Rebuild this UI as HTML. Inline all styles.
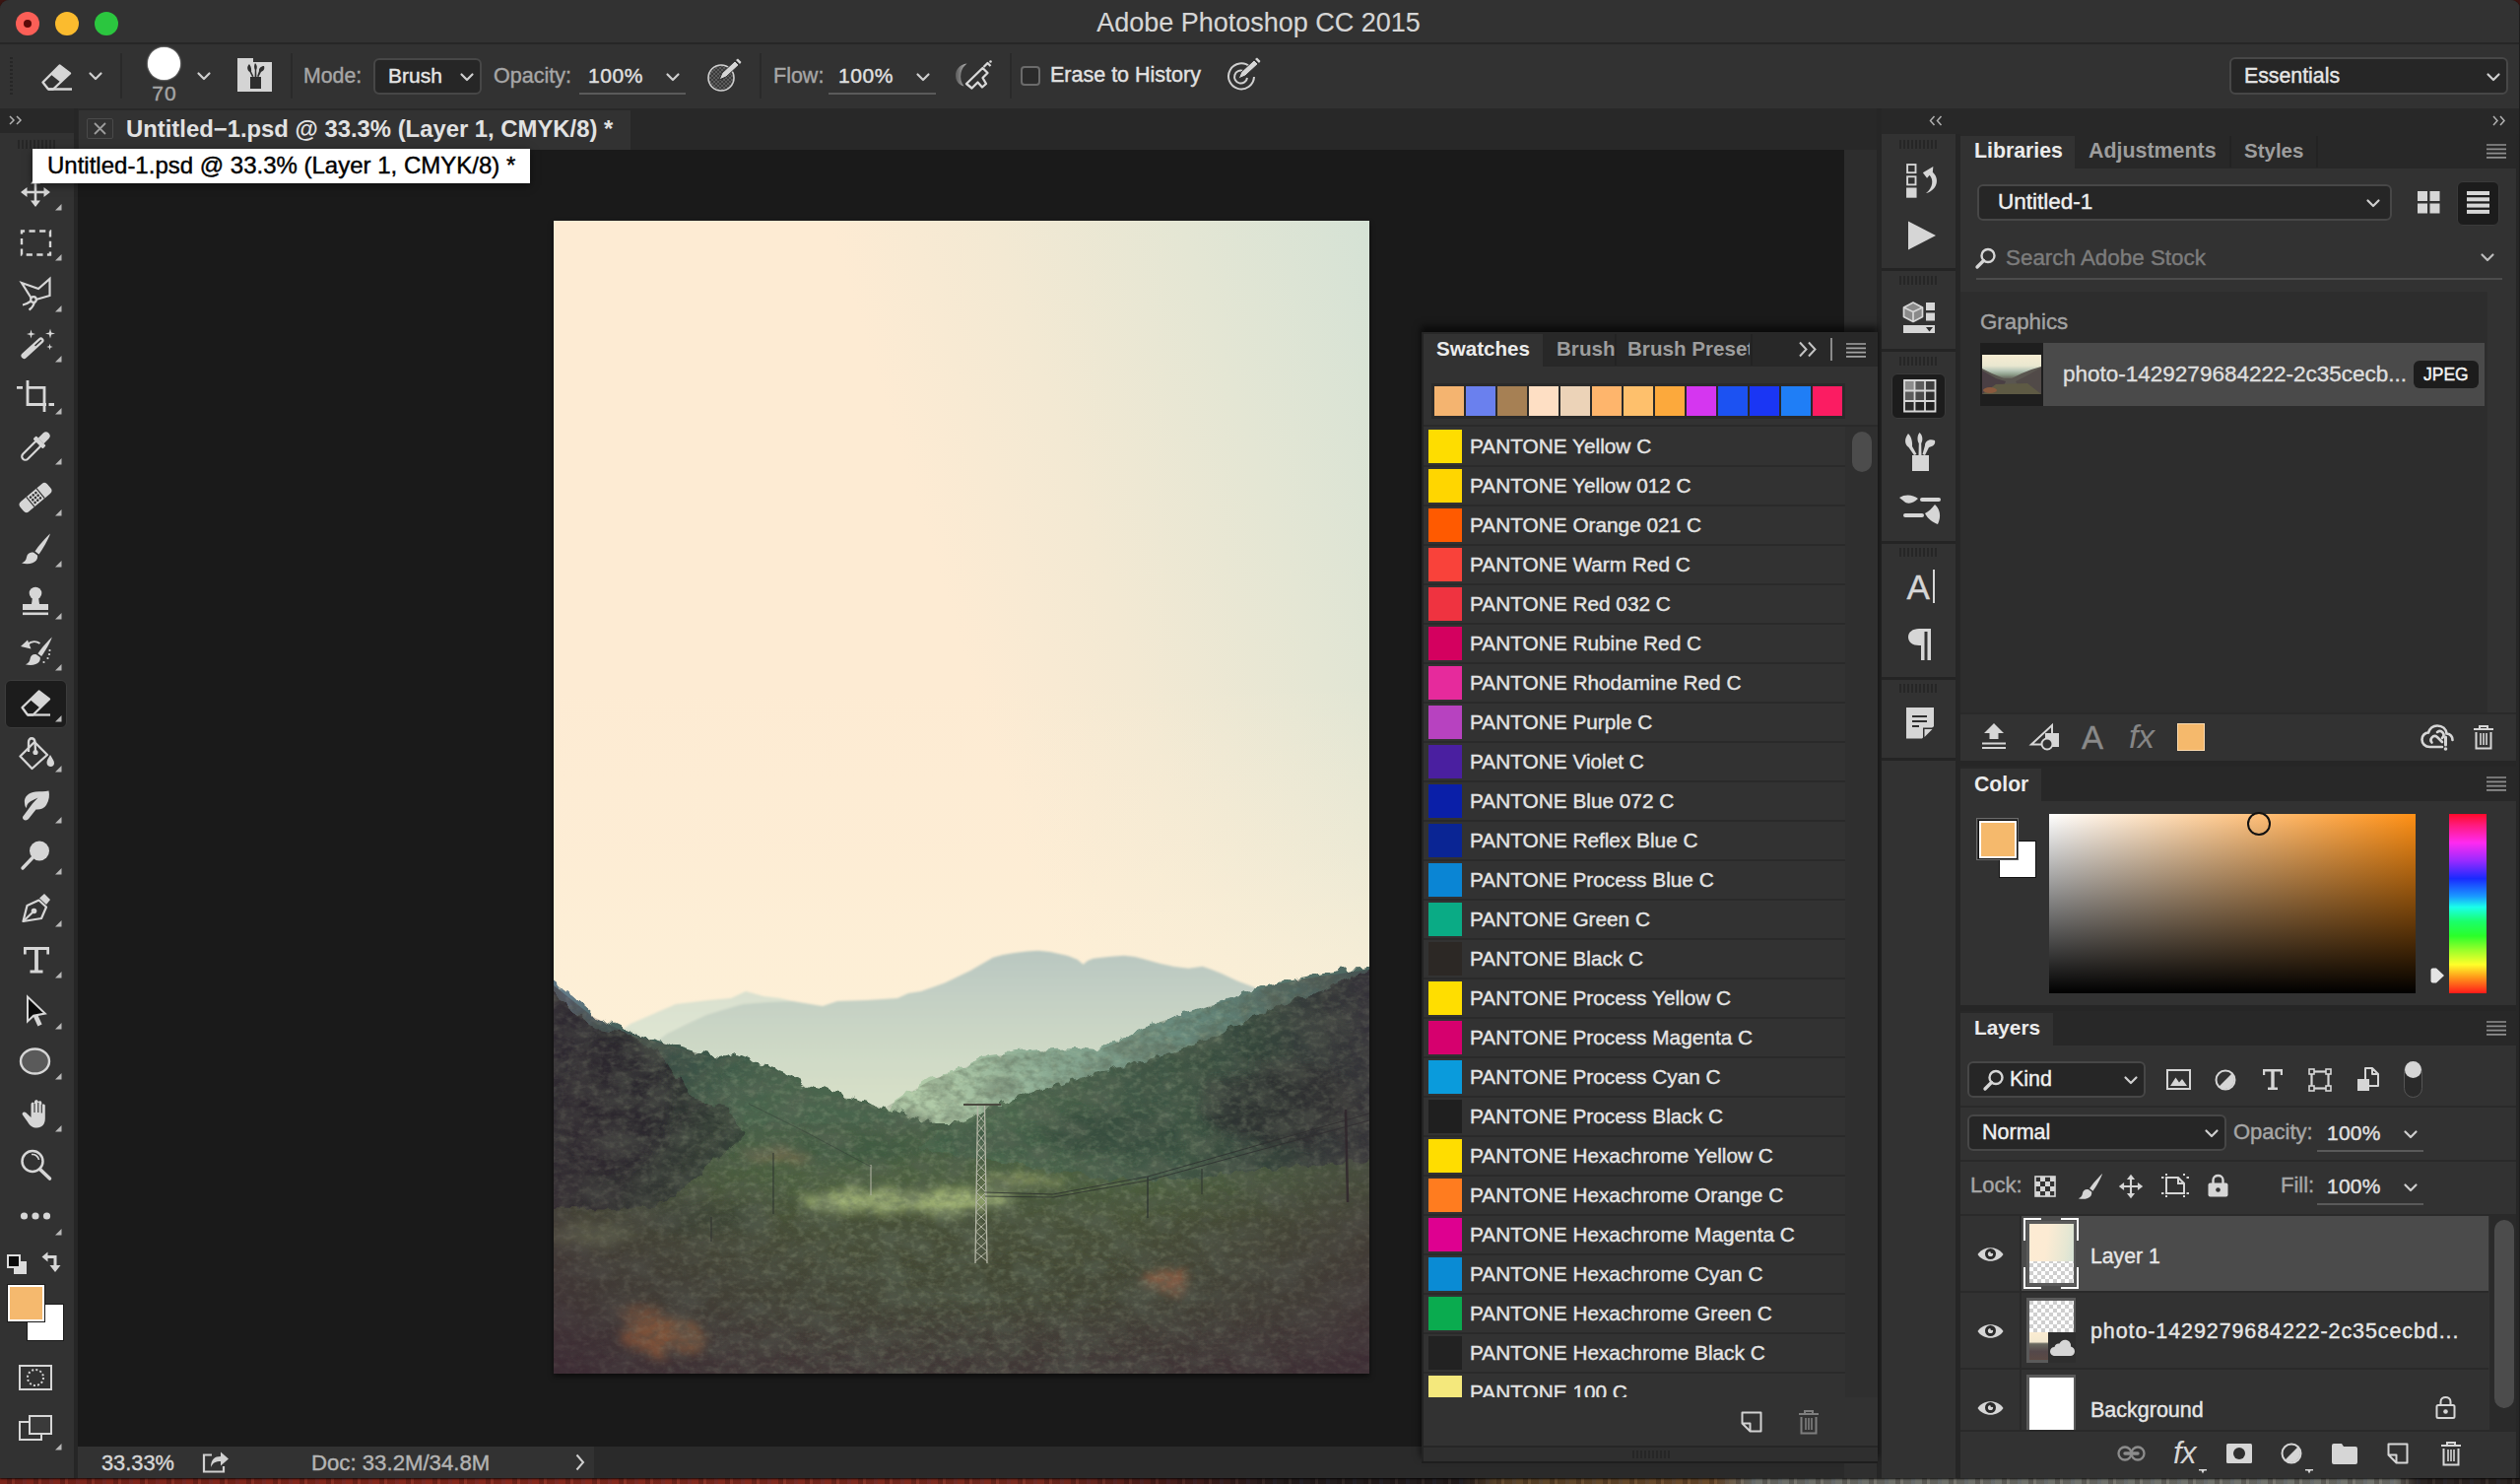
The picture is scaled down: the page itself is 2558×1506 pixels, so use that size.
<!DOCTYPE html>
<html lang="en">
<head>
<meta charset="utf-8">
<title>Adobe Photoshop CC 2015</title>
<style>
*{box-sizing:border-box;margin:0;padding:0}
html,body{width:2558px;height:1506px;overflow:hidden}
body{position:relative;background:#3a1512;font-family:"Liberation Sans",sans-serif;font-size:21px;color:#dcdcdc;-webkit-font-smoothing:antialiased}
.a{position:absolute}
.t{position:absolute;white-space:pre;line-height:1;-webkit-text-stroke:.4px currentColor}
.dim{color:#a6a6a6}
.b{font-weight:bold;-webkit-text-stroke:0}
svg{position:absolute;overflow:visible}
#win{position:absolute;left:0;top:0;width:2558px;height:1500px;background:#282828;border-radius:9px 9px 0 0;overflow:hidden;box-shadow:0 1px 2px rgba(0,0,0,.8)}
#desk{position:absolute;left:0;top:1498px;width:2558px;height:8px;background:repeating-linear-gradient(90deg,rgba(20,10,10,.0) 0 7px,rgba(20,10,10,.25) 7px 12px,rgba(200,160,140,.08) 12px 15px,rgba(20,10,10,.15) 15px 23px,rgba(40,60,110,.12) 23px 27px),linear-gradient(90deg,#7c241a 0,#86281c 20%,#7a2a1e 41%,#4a1c18 46%,#221c1c 51%,#221c1c 58%,#5a4428 59.500%,#6a4a2a 68%,#6c6e68 69.500%,#70726c 95%,#2a2422 96%)}
.dd{position:absolute;background:#262626;border:2px solid #474747;border-radius:6px}
.ul{position:absolute;height:1.5px;background:#5a5a5a}
.sep{position:absolute;width:2px;background:#2a2a2a}
.tabbar{position:absolute;background:#282828}
.tab{position:absolute;background:#323232}
.grip{position:absolute;height:9px;background:repeating-linear-gradient(90deg,#262626 0 2px,transparent 2px 4px)}
</style>
</head>
<body>
<div id="desk"></div>
<div id="win">

<!-- TITLEBAR -->
<div class="a" id="titlebar" style="left:0;top:0;width:2558px;height:43px;background:#323232"></div>
<div class="a" style="left:0;top:43px;width:2558px;height:2px;background:#262626"></div>
<div class="a" style="left:16px;top:12px;width:24px;height:24px;border-radius:50%;background:#fc5f57"></div>
<div class="a" style="left:24px;top:20px;width:8px;height:8px;border-radius:50%;background:#5c0a08"></div>
<div class="a" style="left:56px;top:12px;width:24px;height:24px;border-radius:50%;background:#fbbb2e"></div>
<div class="a" style="left:96px;top:12px;width:24px;height:24px;border-radius:50%;background:#2bc63f"></div>
<div class="t" style="left:0;width:2558px;text-align:center;top:10px;font-size:27px;color:#d6d6d6;padding-right:3px;-webkit-text-stroke:.15px currentColor">Adobe Photoshop CC 2015</div>

<!-- OPTIONSBAR -->
<div class="a" id="optbar" style="left:0;top:45px;width:2558px;height:65px;background:#323232"></div>
<!-- grip -->
<div class="a" style="left:10px;top:58px;width:3px;height:38px;background:repeating-linear-gradient(180deg,#262626 0 2px,transparent 2px 4px)"></div>
<!-- eraser icon -->
<svg style="left:40px;top:62px" width="36" height="32" viewBox="0 0 36 32"><g fill="none" stroke="#d6d6d6" stroke-width="2.4" stroke-linejoin="round"><path d="M3.5 21.5 L20.5 4.5 L31 12.5 L14 28.5 L9 28.5 Z"/><path d="M9 28.5 H33"/></g><path d="M11.5 13.5 L20.5 4.5 L31 12.5 L21.5 21.5 Z" fill="#d6d6d6"/></svg>
<svg style="left:90px;top:73px" width="14" height="9" viewBox="0 0 14 9"><path d="M1.5 1.5 L7 7 L12.5 1.5" fill="none" stroke="#cfcfcf" stroke-width="2.2" stroke-linecap="round" stroke-linejoin="round"/></svg>
<div class="sep" style="left:122px;top:54px;height:46px"></div>
<!-- brush preview -->
<div class="a" style="left:150px;top:48px;width:33px;height:33px;border-radius:50%;background:#fff;box-shadow:0 0 2px #fff"></div>
<div class="t dim" style="left:138px;width:58px;text-align:center;top:84px;font-size:21px;letter-spacing:1px">70</div>
<svg style="left:200px;top:73px" width="14" height="9" viewBox="0 0 14 9"><path d="M1.5 1.5 L7 7 L12.5 1.5" fill="none" stroke="#cfcfcf" stroke-width="2.2" stroke-linecap="round" stroke-linejoin="round"/></svg>
<!-- brush panel icon -->
<svg style="left:241px;top:59px" width="35" height="34" viewBox="0 0 35 34"><path d="M0 0 H16 V4 H35 V34 H0 Z" fill="#d4d4d4"/><g fill="#2e2e2e"><rect x="13" y="19" width="11" height="12"/><path d="M12 6 C9.5 8.5 9.5 12 12.5 14 L15 19 L16.5 18.5 L14 13.5 C14.5 11 13.5 8 12 6Z"/><path d="M18 5 C16.8 7 16.8 10 17.8 12 L17.6 19 H19.4 L19.2 12 C20.2 10 20.2 7 18 5Z"/><path d="M27 8 C24 8 21.5 10.5 22 13 L20 18.5 L21.5 19 L24 14 C26.5 13 28 11 27 8Z"/></g></svg>
<div class="sep" style="left:295px;top:54px;height:46px"></div>
<div class="t dim" style="left:308px;top:67px;font-size:21.3px">Mode:</div>
<div class="dd" style="left:379px;top:58.5px;width:110px;height:37px"></div>
<div class="t" style="left:394px;top:66px;font-size:21px;color:#e6e6e6">Brush</div>
<svg style="left:467px;top:74px" width="14" height="9" viewBox="0 0 14 9"><path d="M1.5 1.5 L7 7 L12.5 1.5" fill="none" stroke="#cfcfcf" stroke-width="2.2" stroke-linecap="round" stroke-linejoin="round"/></svg>
<div class="t dim" style="left:501px;top:67px;font-size:21.5px">Opacity:</div>
<div class="t" style="left:597px;top:66px;font-size:21px;color:#e0e0e0;letter-spacing:.6px">100%</div>
<div class="ul" style="left:588px;top:94px;width:108px"></div>
<svg style="left:676px;top:74px" width="14" height="9" viewBox="0 0 14 9"><path d="M1.5 1.5 L7 7 L12.5 1.5" fill="none" stroke="#cfcfcf" stroke-width="2.2" stroke-linecap="round" stroke-linejoin="round"/></svg>
<!-- pressure opacity icon -->
<svg style="left:716px;top:58px" width="38" height="38" viewBox="0 0 38 38"><defs><pattern id="ck" width="4" height="4" patternUnits="userSpaceOnUse"><rect width="4" height="4" fill="#3a3a3a"/><rect width="2" height="2" fill="#5c5c5c"/><rect x="2" y="2" width="2" height="2" fill="#5c5c5c"/></pattern></defs><circle cx="16" cy="21" r="13" fill="url(#ck)" stroke="#cfcfcf" stroke-width="1.6"/><path d="M14 23 L17 16 L30 4 L34 8 L21 20 Z" fill="#d6d6d6" stroke="#323232" stroke-width="1"/><path d="M31 3 L33 1.5 L36.5 5 L35 7Z" fill="#d6d6d6"/></svg>
<div class="sep" style="left:771px;top:54px;height:46px"></div>
<div class="t dim" style="left:785px;top:67px;font-size:21.5px">Flow:</div>
<div class="t" style="left:851px;top:66px;font-size:21px;color:#e0e0e0;letter-spacing:.6px">100%</div>
<div class="ul" style="left:841px;top:94px;width:109px"></div>
<svg style="left:930px;top:74px" width="14" height="9" viewBox="0 0 14 9"><path d="M1.5 1.5 L7 7 L12.5 1.5" fill="none" stroke="#cfcfcf" stroke-width="2.2" stroke-linecap="round" stroke-linejoin="round"/></svg>
<!-- airbrush icon -->
<svg style="left:968px;top:60px" width="42" height="34" viewBox="0 0 42 34"><defs><linearGradient id="abg" x1="0" y1="0" x2="1" y2="0"><stop offset="0" stop-color="#5a5a5a"/><stop offset="1" stop-color="#b4b4b4"/></linearGradient></defs><path d="M13.500 4.500 C6 5.500 1.500 11 2 17.500 C2.500 23 6 26.500 10.500 27.500 C7.500 23.500 6.500 19 7.500 14 C8.300 10 10.500 6.800 13.500 4.500Z" fill="url(#abg)"/><g fill="none" stroke="#d9d9d9" stroke-width="2.300" stroke-linejoin="round"><path d="M13 25 L29.500 9 L34.500 14 L29.500 19 L33 25 L29 28.500 L24.500 23.500 L18.500 29.500 Z"/><path d="M30.500 8 L34.500 4 L37.500 7"/></g><circle cx="37.500" cy="2.500" r="1.300" fill="#d9d9d9"/></svg>
<div class="sep" style="left:1025px;top:54px;height:46px"></div>
<div class="a" style="left:1036px;top:67px;width:20px;height:20px;border:2px solid #6b6b6b;border-radius:4px;background:#2b2b2b"></div>
<div class="t" style="left:1066px;top:66px;font-size:21.5px;color:#e2e2e2">Erase to History</div>
<!-- pressure size icon -->
<svg style="left:1243px;top:56px" width="38" height="40" viewBox="0 0 38 40"><g fill="none" stroke="#cfcfcf" stroke-width="2"><path d="M26 12 A13 13 0 1 0 30 22"/><path d="M19 16 A6.5 6.5 0 1 0 23 23"/></g><path d="M14 24 L17 17 L30 5 L34 9 L21 21 Z" fill="#d6d6d6" stroke="#323232" stroke-width="1"/><path d="M31 4 L33 2.5 L36.5 6 L35 8Z" fill="#d6d6d6"/></svg>
<!-- essentials -->
<div class="dd" style="left:2263px;top:58px;width:283px;height:38px"></div>
<div class="t" style="left:2278px;top:67px;font-size:21.3px;color:#e6e6e6">Essentials</div>
<svg style="left:2524px;top:74px" width="14" height="9" viewBox="0 0 14 9"><path d="M1.5 1.5 L7 7 L12.5 1.5" fill="none" stroke="#cfcfcf" stroke-width="2.2" stroke-linecap="round" stroke-linejoin="round"/></svg>


<!-- TOOLBAR -->
<div class="a" style="left:0;top:110px;width:74.5px;height:25px;background:#282828"></div>
<div class="a" style="left:0;top:135px;width:74.5px;height:1365px;background:#323232"></div>
<div class="a" style="left:74.5px;top:110px;width:5px;height:1390px;background:#262626"></div>
<svg style="left:9px;top:117px" width="14" height="10" viewBox="0 0 14 10"><path d="M1 1 L5 5 L1 9 M8 1 L12 5 L8 9" fill="none" stroke="#b0b0b0" stroke-width="1.5"/></svg>
<div class="grip" style="left:18px;top:142px;width:39px"></div>
<svg style="left:20px;top:179px" width="32" height="32" viewBox="0 0 32 32"><path fill="#d6d6d6" d="M16 1 L21 7.5 H17.3 V14.7 H24.5 V11 L31 16 L24.5 21 V17.3 H17.3 V24.5 H21 L16 31 L11 24.5 H14.7 V17.3 H7.5 V21 L1 16 L7.5 11 V14.7 H14.7 V7.5 H11 Z"/></svg>
<svg style="left:56px;top:207px" width="7" height="7" viewBox="0 0 7 7"><path d="M6.5 0 V6.5 H0 Z" fill="#b8b8b8"/></svg>
<svg style="left:20px;top:230px" width="32" height="32" viewBox="0 0 32 32"><rect x="2" y="4.5" width="29" height="24" fill="none" stroke="#d6d6d6" stroke-width="2.4" stroke-dasharray="6.2 4.4" stroke-dashoffset="3.1"/></svg>
<svg style="left:56px;top:258px" width="7" height="7" viewBox="0 0 7 7"><path d="M6.5 0 V6.5 H0 Z" fill="#b8b8b8"/></svg>
<svg style="left:20px;top:282px" width="32" height="32" viewBox="0 0 32 32"><g fill="none" stroke="#d6d6d6" stroke-width="2.2" stroke-linejoin="miter"><path d="M12 21 L2 5 L19 11 L30.5 1 V18 L16.5 22"/><circle cx="14" cy="22" r="2.8"/><path d="M11.5 23.5 C8 26 6 27 3 27.5 M15 25 C14 28 12 31 9.5 32.5"/></g></svg>
<svg style="left:56px;top:310px" width="7" height="7" viewBox="0 0 7 7"><path d="M6.5 0 V6.5 H0 Z" fill="#b8b8b8"/></svg>
<svg style="left:20px;top:333px" width="32" height="32" viewBox="0 0 32 32"><path d="M4.5 28 L21.5 12.5" stroke="#d6d6d6" stroke-width="6" stroke-linecap="round" fill="none"/><path d="M16 17.5 L21.5 12.5" stroke="#323232" stroke-width="1.6" stroke-linecap="round"/><path fill="#d6d6d6" d="M11.5 1.5 L12.49 5.01 L16.0 6 L12.49 6.99 L11.5 10.5 L10.51 6.99 L7.0 6 L10.51 5.01Z M31 0.5 L32.1 4.4 L36 5.5 L32.1 6.6 L31 10.5 L29.9 6.6 L26 5.5 L29.9 4.4Z M30.5 15.8 L31.204 18.296 L33.7 19 L31.204 19.704 L30.5 22.2 L29.796 19.704 L27.3 19 L29.796 18.296Z"/></svg>
<svg style="left:56px;top:361px" width="7" height="7" viewBox="0 0 7 7"><path d="M6.5 0 V6.5 H0 Z" fill="#b8b8b8"/></svg>
<svg style="left:20px;top:386px" width="32" height="32" viewBox="0 0 32 32"><g fill="none" stroke="#d6d6d6" stroke-width="2.8"><path d="M8 0 V24.5 H27"/><path d="M8 7.3 H25 V32"/><path d="M-3 7.3 H3 M29.5 24.5 H35"/></g></svg>
<svg style="left:56px;top:414px" width="7" height="7" viewBox="0 0 7 7"><path d="M6.5 0 V6.5 H0 Z" fill="#b8b8b8"/></svg>
<svg style="left:20px;top:437px" width="32" height="32" viewBox="0 0 32 32"><g transform="rotate(45 16 16)"><rect x="12.5" y="10" width="7" height="24" rx="3.5" fill="none" stroke="#d6d6d6" stroke-width="2.2"/><rect x="9" y="8" width="14" height="4.5" rx="1" fill="#d6d6d6"/><path d="M12 8 V1 Q12 -3 16 -3 Q20 -3 20 1 V8Z" fill="#d6d6d6"/></g></svg>
<svg style="left:56px;top:465px" width="7" height="7" viewBox="0 0 7 7"><path d="M6.5 0 V6.5 H0 Z" fill="#b8b8b8"/></svg>
<svg style="left:20px;top:489px" width="32" height="32" viewBox="0 0 32 32"><g transform="rotate(-40 16 16)"><rect x="-2" y="9.5" width="36" height="13" rx="4" fill="#d6d6d6"/><g fill="#323232"><circle cx="12.5" cy="12.5" r="1.3"/><circle cx="16" cy="12.5" r="1.3"/><circle cx="19.5" cy="12.5" r="1.3"/><circle cx="12.5" cy="16" r="1.3"/><circle cx="16" cy="16" r="1.3"/><circle cx="19.5" cy="16" r="1.3"/><circle cx="12.5" cy="19.5" r="1.3"/><circle cx="16" cy="19.5" r="1.3"/><circle cx="19.5" cy="19.5" r="1.3"/><rect x="8.7" y="9.5" width="1.2" height="13"/><rect x="22.1" y="9.5" width="1.2" height="13"/></g></g></svg>
<svg style="left:56px;top:517px" width="7" height="7" viewBox="0 0 7 7"><path d="M6.5 0 V6.5 H0 Z" fill="#b8b8b8"/></svg>
<svg style="left:20px;top:541px" width="32" height="32" viewBox="0 0 32 32"><path fill="#d6d6d6" d="M31 0.5 C27 4 19 13 15.5 18.5 L19.5 21.5 C23.5 16 29 6.5 31 0.5Z"/><path fill="#d6d6d6" d="M14.3 19.8 C10.5 18.5 7.5 21 7 24.5 C6.7 27.5 4.5 29.5 2 30.5 C8 32 14.5 31 17 27.5 C18.5 25.3 18.3 22.5 17.6 22.3Z"/></svg>
<svg style="left:56px;top:569px" width="7" height="7" viewBox="0 0 7 7"><path d="M6.5 0 V6.5 H0 Z" fill="#b8b8b8"/></svg>
<svg style="left:20px;top:594px" width="32" height="32" viewBox="0 0 32 32"><g fill="#d6d6d6"><circle cx="16" cy="8" r="6.3"/><path d="M13 12 H19 L20 19 H12Z"/><path d="M3 19 H29 V25 H3Z" /><rect x="3" y="27.5" width="26" height="2.6"/></g></svg>
<svg style="left:56px;top:622px" width="7" height="7" viewBox="0 0 7 7"><path d="M6.5 0 V6.5 H0 Z" fill="#b8b8b8"/></svg>
<svg style="left:20px;top:646px" width="32" height="32" viewBox="0 0 32 32"><g transform="translate(4 0) scale(0.93)"><path fill="#d6d6d6" d="M31 0.5 C27 4 19 13 15.5 18.5 L19.5 21.5 C23.5 16 29 6.5 31 0.5Z"/><path fill="#d6d6d6" d="M14.3 19.8 C10.5 18.5 7.5 21 7 24.5 C6.7 27.5 4.5 29.5 2 30.5 C8 32 14.5 31 17 27.5 C18.5 25.3 18.3 22.5 17.6 22.3Z"/></g><path d="M1 10 L11.5 12.5 L8 3.5Z" fill="#d6d6d6"/><path d="M8 8 C12 4.5 17 4.5 20.5 7" fill="none" stroke="#d6d6d6" stroke-width="2"/><g fill="#d6d6d6"><circle cx="30.5" cy="14" r="1.1"/><circle cx="30" cy="18" r="1.1"/><circle cx="28.5" cy="22" r="1.1"/><circle cx="24.5" cy="26" r="1.1"/></g></svg>
<svg style="left:56px;top:674px" width="7" height="7" viewBox="0 0 7 7"><path d="M6.5 0 V6.5 H0 Z" fill="#b8b8b8"/></svg>
<div class="a" style="left:5px;top:690px;width:63px;height:49px;background:#1c1c1c;border:1.5px solid #3c3c3c;border-radius:6px"></div>
<svg style="left:20px;top:698px" width="32" height="32" viewBox="0 0 32 32"><g fill="none" stroke="#d6d6d6" stroke-width="2.3" stroke-linejoin="round"><path d="M2.5 20 L19.5 3.5 L30 11.5 L13.5 27.5 L8 27.5 Z"/><path d="M8 27.5 H31"/></g><path d="M10.5 12 L19.5 3.5 L30 11.5 L20.5 20.5 Z" fill="#d6d6d6"/></svg>
<svg style="left:56px;top:726px" width="7" height="7" viewBox="0 0 7 7"><path d="M6.5 0 V6.5 H0 Z" fill="#b8b8b8"/></svg>
<svg style="left:20px;top:749px" width="32" height="32" viewBox="0 0 32 32"><g fill="none" stroke="#d6d6d6" stroke-width="2.3" stroke-linejoin="round"><path d="M15 4 L28 17 L12.5 31 L0.5 18.5 Z"/><path d="M9 14 V4 C9 -1 15 -1 15.5 4 L16 13"/></g><circle cx="16" cy="14.5" r="2.6" fill="#d6d6d6"/><path d="M31 17 C28.5 21 27.5 23 27.5 25 C27.5 27.5 29.5 29 31.5 29 C33.5 29 35 27.5 35 25.5 C35 23 33 20.5 31 17Z" fill="#d6d6d6"/></svg>
<svg style="left:56px;top:777px" width="7" height="7" viewBox="0 0 7 7"><path d="M6.5 0 V6.5 H0 Z" fill="#b8b8b8"/></svg>
<svg style="left:20px;top:801px" width="32" height="32" viewBox="0 0 32 32"><path fill="#d6d6d6" d="M5 14 C4 8 9 3 16 2.5 C21 2 25.5 2.5 29.5 1.5 C30.5 6 30 11 27 16 C25 19.5 20 21 16.5 20.5 L9 30 C7 32.5 2.5 31.5 3 28 L13 14.5 L18.5 8.5 L12.5 11.5 C9.5 13 7 15 7 19 C5.5 18 5.2 16 5 14Z"/></svg>
<svg style="left:56px;top:829px" width="7" height="7" viewBox="0 0 7 7"><path d="M6.5 0 V6.5 H0 Z" fill="#b8b8b8"/></svg>
<svg style="left:20px;top:853px" width="32" height="32" viewBox="0 0 32 32"><circle cx="20" cy="10.5" r="10" fill="#d6d6d6"/><path d="M13 17.5 L3 28" stroke="#d6d6d6" stroke-width="3.4" stroke-linecap="round"/></svg>
<svg style="left:56px;top:881px" width="7" height="7" viewBox="0 0 7 7"><path d="M6.5 0 V6.5 H0 Z" fill="#b8b8b8"/></svg>
<svg style="left:20px;top:906px" width="32" height="32" viewBox="0 0 32 32"><g fill="none" stroke="#d6d6d6" stroke-width="2.2" stroke-linejoin="round"><path d="M3.5 29 L7.5 13 L19.5 7.5 L27 14.5 L22 26 Z"/><path d="M3.5 29 L13.5 19.5"/></g><circle cx="14.5" cy="18.5" r="2.8" fill="#d6d6d6"/><path d="M20 5.5 L25 1 L31 7 L27 12Z" fill="#d6d6d6"/></svg>
<svg style="left:56px;top:934px" width="7" height="7" viewBox="0 0 7 7"><path d="M6.5 0 V6.5 H0 Z" fill="#b8b8b8"/></svg>
<svg style="left:20px;top:958px" width="32" height="32" viewBox="0 0 32 32"><path fill="#d6d6d6" d="M4 3 H30 V10.5 H27.300 V6 H18.900 V26.500 H23.500 V29.500 H10.500 V26.500 H15.100 V6 H6.700 V10.500 H4Z"/></svg>
<svg style="left:56px;top:986px" width="7" height="7" viewBox="0 0 7 7"><path d="M6.5 0 V6.5 H0 Z" fill="#b8b8b8"/></svg>
<svg style="left:20px;top:1010px" width="32" height="32" viewBox="0 0 32 32"><path d="M15.5 19.5 L20.5 30.5" stroke="#d6d6d6" stroke-width="4.6" fill="none"/><path d="M8 1.5 V26.5 L14 20.8 L25.8 18.6 Z" fill="#0a0a0a" stroke="#d6d6d6" stroke-width="2" stroke-linejoin="miter"/></svg>
<svg style="left:56px;top:1038px" width="7" height="7" viewBox="0 0 7 7"><path d="M6.5 0 V6.5 H0 Z" fill="#b8b8b8"/></svg>
<svg style="left:20px;top:1061px" width="32" height="32" viewBox="0 0 32 32"><ellipse cx="15.5" cy="16" rx="14.5" ry="12.5" fill="#5a5a5a" stroke="#d6d6d6" stroke-width="2.4"/></svg>
<svg style="left:56px;top:1089px" width="7" height="7" viewBox="0 0 7 7"><path d="M6.5 0 V6.5 H0 Z" fill="#b8b8b8"/></svg>
<svg style="left:20px;top:1114px" width="32" height="32" viewBox="0 0 32 32"><path fill="#d6d6d6" d="M11.5 17 V6.5 C11.5 4 15 4 15 6.5 V4 C15 1.5 18.8 1.5 18.8 4 V5 C18.8 2.8 22.3 2.8 22.3 5 V8 C22.3 6 25.8 6 25.8 8 V21 C25.8 27 22.5 30.5 17.5 30.5 C13 30.5 10.5 28.5 8 24.5 L3 17.5 C1.5 15.3 4.5 13.2 6.5 15.2 L11.5 20Z"/><g stroke="#323232" stroke-width="1.1"><path d="M15 6 V15 M18.8 5 V15 M22.3 7 V15.5"/></g></svg>
<svg style="left:56px;top:1142px" width="7" height="7" viewBox="0 0 7 7"><path d="M6.5 0 V6.5 H0 Z" fill="#b8b8b8"/></svg>
<svg style="left:20px;top:1166px" width="32" height="32" viewBox="0 0 32 32"><g fill="none" stroke="#d6d6d6"><circle cx="13" cy="12.5" r="10.5" stroke-width="2.5"/><path d="M20.5 20.5 L30.5 30" stroke-width="3.6" stroke-linecap="round"/><path d="M12 5.5 C15.5 5 19 7.5 19.5 11" stroke-width="1.6"/></g></svg>
<svg style="left:20px;top:1218px" width="32" height="32" viewBox="0 0 32 32"><g fill="#d6d6d6"><circle cx="4.5" cy="16" r="3.6"/><circle cx="16" cy="16" r="3.6"/><circle cx="27.5" cy="16" r="3.6"/></g></svg>
<svg style="left:56px;top:1247px" width="7" height="7" viewBox="0 0 7 7"><path d="M6.5 0 V6.5 H0 Z" fill="#b8b8b8"/></svg>
<div class="a" style="left:14px;top:1280px;width:13px;height:13px;background:#dcdcdc"></div>
<div class="a" style="left:7px;top:1273px;width:14px;height:14px;background:#0a0a0a;border:2px solid #dcdcdc"></div>
<svg style="left:42px;top:1270px" width="21" height="22" viewBox="0 0 21 22"><path d="M0.5 5.5 L6.5 0.5 V4 H15.5 V14 H19.5 L14 21 L8.5 14 H12.5 V7 H6.5 V10.5Z" fill="#d6d6d6"/></svg>
<div class="a" style="left:27px;top:1323px;width:38px;height:38px;background:#fff;border:1px solid #1a1a1a"></div>
<div class="a" style="left:8px;top:1304px;width:37px;height:37px;background:#f5b96e;border:2px solid #fff;outline:1px solid #1a1a1a"></div>
<svg style="left:19px;top:1385px" width="34" height="26" viewBox="0 0 34 26"><rect x="1" y="1" width="32" height="24" fill="none" stroke="#d6d6d6" stroke-width="2"/><circle cx="17" cy="13" r="8" fill="none" stroke="#d6d6d6" stroke-width="2" stroke-dasharray="2 2.2"/></svg>
<svg style="left:19px;top:1436px" width="34" height="26" viewBox="0 0 34 26"><rect x="1" y="7" width="22" height="18" fill="none" stroke="#d6d6d6" stroke-width="2"/><rect x="11" y="1" width="22" height="18" fill="#3a3a3a" stroke="#d6d6d6" stroke-width="2"/></svg>
<svg style="left:56px;top:1465px" width="7" height="7" viewBox="0 0 7 7"><path d="M6.5 0 V6.5 H0 Z" fill="#b8b8b8"/></svg>


<!-- DOCUMENT -->
<!-- doc tab bar -->
<div class="tabbar" style="left:79px;top:110px;width:1826px;height:42px"></div>
<div class="tab" style="left:80px;top:112px;width:560px;height:40px"></div>
<div class="a" style="left:88px;top:120px;width:27px;height:21px;border:1.5px solid #4a4a4a;border-radius:2px"></div>
<svg style="left:95px;top:124px" width="13" height="13" viewBox="0 0 13 13"><path d="M1 1 L12 12 M12 1 L1 12" stroke="#9c9c9c" stroke-width="1.8" fill="none"/></svg>
<div class="t b" style="left:128px;top:119px;font-size:23.85px;color:#e2e2e2">Untitled&#8722;1.psd @ 33.3% (Layer 1, CMYK/8) *</div>
<!-- canvas -->
<div class="a" style="left:79px;top:152px;width:1793px;height:1316px;background:#1a1a1a"></div>
<div class="a" style="left:1872px;top:152px;width:33px;height:1316px;background:#2d2d2d"></div>
<div class="a" style="left:1905px;top:110px;width:5px;height:1390px;background:#262626"></div>
<!-- photo -->
<div class="a" id="photo" style="left:562px;top:224px;width:828px;height:1170px;box-shadow:0 3px 5px rgba(0,0,0,.55);background:linear-gradient(to bottom,rgba(253,241,216,0) 40%,rgba(253,241,216,.3) 55%,rgba(253,241,216,.62) 64%,rgba(253,241,216,.8) 72%,rgba(253,241,216,.9) 84%),linear-gradient(72.6deg,#fdebd3 0%,#fdebd3 54%,#f3e9d3 68%,#e4e6d4 84%,#d5e2d5 100%)">
<svg style="left:0;top:0;overflow:hidden" width="828" height="1170" viewBox="562 224 828 1170">
<defs>
<linearGradient id="gA" x1="0" y1="1006" x2="0" y2="1100" gradientUnits="userSpaceOnUse"><stop offset="0" stop-color="#d9e0cf"/><stop offset="1" stop-color="#e4ead5"/></linearGradient>
<linearGradient id="gB" x1="0" y1="965" x2="0" y2="1110" gradientUnits="userSpaceOnUse"><stop offset="0" stop-color="#b9c7c0"/><stop offset=".3" stop-color="#c3cfc4"/><stop offset=".7" stop-color="#ced9c6"/><stop offset="1" stop-color="#d6dfc8"/></linearGradient>
<linearGradient id="gC" x1="1390" y1="990" x2="960" y2="1150" gradientUnits="userSpaceOnUse"><stop offset="0" stop-color="#4c665f"/><stop offset=".4" stop-color="#65867a"/><stop offset=".75" stop-color="#8dad95"/><stop offset="1" stop-color="#b0caa8"/></linearGradient>
<linearGradient id="gD" x1="600" y1="1000" x2="720" y2="1160" gradientUnits="userSpaceOnUse"><stop offset="0" stop-color="#627a86"/><stop offset=".22" stop-color="#4a6560"/><stop offset=".6" stop-color="#3c5648"/><stop offset="1" stop-color="#48654e"/></linearGradient>
<linearGradient id="gE" x1="1000" y1="1130" x2="1390" y2="1080" gradientUnits="userSpaceOnUse"><stop offset="0" stop-color="#4d6a50"/><stop offset=".35" stop-color="#425a47"/><stop offset=".7" stop-color="#364a3e"/><stop offset="1" stop-color="#33393a"/></linearGradient>
<linearGradient id="gF" x1="562" y1="1010" x2="760" y2="1200" gradientUnits="userSpaceOnUse"><stop offset="0" stop-color="#2b2d33"/><stop offset=".55" stop-color="#2d3332"/><stop offset="1" stop-color="#3a4a3a"/></linearGradient>
<linearGradient id="gG" x1="0" y1="1130" x2="0" y2="1394" gradientUnits="userSpaceOnUse"><stop offset="0" stop-color="#46604a"/><stop offset=".25" stop-color="#4d6040"/><stop offset=".42" stop-color="#475037"/><stop offset=".75" stop-color="#444737"/><stop offset="1" stop-color="#433b38"/></linearGradient>
<radialGradient id="gV" cx="990" cy="1050" r="560" gradientUnits="userSpaceOnUse"><stop offset=".45" stop-color="#3a2232" stop-opacity="0"/><stop offset=".8" stop-color="#3a2232" stop-opacity=".38"/><stop offset="1" stop-color="#3a2232" stop-opacity=".7"/></radialGradient>
<filter id="bl" x="-5%" y="-5%" width="110%" height="110%"><feGaussianBlur stdDeviation="1"/></filter>
<filter id="rg" x="-5%" y="-10%" width="110%" height="120%"><feTurbulence type="fractalNoise" baseFrequency=".09 .07" numOctaves="2" seed="4" result="t"/><feDisplacementMap in="SourceGraphic" in2="t" scale="13" xChannelSelector="R" yChannelSelector="G"/><feGaussianBlur stdDeviation=".7"/></filter>
<filter id="bl2" x="-30%" y="-30%" width="160%" height="160%"><feTurbulence type="fractalNoise" baseFrequency=".05" numOctaves="2" seed="9" result="t"/><feDisplacementMap in="SourceGraphic" in2="t" scale="28"/><feGaussianBlur stdDeviation="5"/></filter>
<filter id="nz" x="0" y="0" width="100%" height="100%"><feTurbulence type="fractalNoise" baseFrequency=".1 .15" numOctaves="3" seed="7"/><feColorMatrix type="matrix" values="0 0 0 0 .09  0 0 0 0 .12  0 0 0 0 .08  2.2 0 0 0 -.85"/></filter>
<filter id="nz2" x="0" y="0" width="100%" height="100%"><feTurbulence type="fractalNoise" baseFrequency=".12 .17" numOctaves="3" seed="23"/><feColorMatrix type="matrix" values="0 0 0 0 .62  0 0 0 0 .72  0 0 0 0 .45  0 2.2 0 0 -1"/></filter>
<filter id="nz3" x="0" y="0" width="100%" height="100%"><feTurbulence type="fractalNoise" baseFrequency=".028 .04" numOctaves="2" seed="31"/><feColorMatrix type="matrix" values="0 0 0 0 .11  0 0 0 0 .14  0 0 0 0 .1  0 0 2.6 0 -1.05"/></filter>
<clipPath id="land"><path d="M562 1000 L602 1032 L640 1050 L680 1061 L730 1075 L748 1071 L798 1091 L823 1106 L866 1116 L897 1125 L943 1097 L976 1085 L998 1074 L1032 1069 L1069 1066 L1112 1067 L1137 1057 L1174 1038 L1212 1026 L1255 1013 L1286 1001 L1332 992 L1390 984 V1394 H562Z"/></clipPath>
<clipPath id="fg"><path d="M562 1150 H1390 V1394 H562Z"/></clipPath>
</defs>
<g filter="url(#bl)">
<path fill="url(#gA)" d="M630 1046 L640 1039 L686 1019 L720 1015 L742 1013 L757 1006 L775 1011 L792 1013 L813 1018 L860 1030 V1100 H630Z"/>
<path fill="url(#gB)" d="M660 1062 L677 1049 L717 1030 L754 1019 L780 1017 L804 1016 L835 1021 L850 1016 L880 1015 L911 1013 L922 1008 L935 1006 L959 997.5 L985 985 L1008 971.7 L1018 969 L1030 967 L1042 965.5 L1054 964.8 L1066 966 L1075 968 L1084 970 L1093.6 973.7 L1099.6 978.7 L1104 975 L1109.5 972.7 L1125 971 L1141 969.8 L1152 971 L1160 973 L1177 977.7 L1192 981 L1206.7 982.7 L1220.6 980.7 L1230 984 L1240 988 L1256 995.6 L1272 1001.500 L1300 1015 V1160 H660Z"/>
</g>
<g filter="url(#rg)">
<path fill="url(#gC)" d="M1410 980 L1360 985 L1332 990 L1286 999 L1255 1011 L1212 1024 L1174 1036 L1137 1055 L1112 1065 L1090 1063 L1069 1064 L1032 1067 L998 1072 L976 1083 L943 1095 L920 1110 L897 1125 L880 1140 V1210 H1410Z"/>
<path fill="url(#gD)" d="M540 980 L562 997 L580 1010 L602 1030 L640 1048 L680 1059 L710 1068 L730 1073 L748 1069 L770 1078 L798 1089 L823 1104 L866 1114 L897 1123 L922 1132 L960 1145 L990 1160 V1210 H540Z"/>
<path fill="url(#gG)" d="M540 1140 H1410 V1420 H540Z"/>
<path fill="url(#gE)" d="M1410 978 L1390 985 L1370 992 L1348 1002 L1325 1010 L1301 1021 L1264 1036 L1230 1052 L1193 1067 L1150 1080 L1112 1089 L1078 1101 L1047 1107 L1016 1120 L976 1138 L950 1150 L935 1165 L976 1172 L1050 1185 L1131 1197 L1200 1196 L1290 1186 L1410 1174Z"/>
<path fill="url(#gF)" d="M540 995 L562 1010 L575 1018 L587 1030 L606 1045 L634 1049 L655 1060 L671 1070 L689 1095 L705 1117 L742 1126 L754 1151 L745 1165 L722 1180 L705 1195 L690 1210 L670 1222 L620 1228 L540 1224Z"/>
</g>
<g filter="url(#bl2)">
<ellipse cx="925" cy="1219" rx="110" ry="13" fill="#a3b577" opacity=".9"/>
<ellipse cx="1035" cy="1197" rx="45" ry="7" fill="#a3ad6c" opacity=".7"/>
<ellipse cx="600" cy="1252" rx="45" ry="12" fill="#7f9064" opacity=".6"/>
<ellipse cx="860" cy="1168" rx="80" ry="12" fill="#3f5a42" opacity=".8"/>
<ellipse cx="1010" cy="1160" rx="60" ry="14" fill="#3d5843" opacity=".7"/>
<ellipse cx="1300" cy="1120" rx="80" ry="42" fill="#2a2f31" opacity=".8"/>
<ellipse cx="1130" cy="1150" rx="70" ry="22" fill="#33493c" opacity=".7"/>
<ellipse cx="625" cy="1120" rx="55" ry="70" fill="#27282c" opacity=".75"/>
<ellipse cx="720" cy="1235" rx="60" ry="14" fill="#3c4a36" opacity=".7"/>
<ellipse cx="672" cy="1356" rx="42" ry="20" fill="#b4763f" opacity=".85"/>
<ellipse cx="650" cy="1332" rx="22" ry="8" fill="#a86e3f" opacity=".7"/>
<ellipse cx="1186" cy="1300" rx="26" ry="12" fill="#a56a4a" opacity=".8"/>
<ellipse cx="790" cy="1172" rx="34" ry="6" fill="#9a7a55" opacity=".55"/>
<ellipse cx="1030" cy="1300" rx="120" ry="25" fill="#3f4634" opacity=".5"/>
</g>
<g clip-path="url(#land)">
<rect x="562" y="990" width="828" height="404" filter="url(#nz3)" opacity=".5"/>
<rect x="562" y="990" width="828" height="404" filter="url(#nz)" opacity=".42"/>
<rect x="562" y="990" width="828" height="404" filter="url(#nz2)" opacity=".2"/>
</g>
<!-- pylon & lines -->
<g stroke="#b4b6a6" fill="none">
<path d="M978 1121 H1016" stroke-width="2" stroke="#4a4a40"/>
<path d="M992.5 1122 L990 1282 M999.5 1122 L1002 1282" stroke-width="1.3"/>
<path d="M992 1130 L1000 1140 L992 1150 L1000 1160 L991.5 1170 L1000.500 1180 L991 1190 L1001 1200 L991 1210 L1001 1220 L990.500 1230 L1001.500 1240 L990.500 1250 L1001.500 1260 L990 1270 L1002 1280" stroke-width="1"/>
<path d="M1000 1130 L992 1140 L1000 1150 L992 1160 L1000.500 1170 L991.500 1180 L1001 1190 L991 1200 L1001 1210 L991 1220 L1001.500 1230 L990.500 1240 L1001.500 1250 L990.500 1260 L1002 1270 L990 1280" stroke-width="1"/>
</g>
<g stroke="#2e3230" fill="none" stroke-width="1" opacity=".8">
<path d="M1390 1130 L1165 1194 L1069 1212 L1000 1210"/>
<path d="M1390 1137 L1165 1198 L1069 1215 L1000 1214"/>
<path d="M1165 1194 V1236" stroke-width="1.6"/>
<path d="M1220 1186 V1212" stroke-width="1.2"/>
<path d="M1366 1126 L1368 1220" stroke-width="2.500" stroke="#2b2628"/>
<path d="M884 1213 V1182" stroke="#b4b6a6" stroke-width="1.300"/>
<path d="M884 1184 L820 1150 L760 1120" stroke-width=".8" opacity=".6"/>
<path d="M785 1170 V1232 M722 1235 V1260" stroke-width="1.200"/>
</g>
<rect x="562" y="224" width="828" height="1170" fill="url(#gV)" clip-path="url(#land)"/>
</svg>
</div>
<!-- tooltip -->
<div class="a" style="left:33px;top:151px;width:505px;height:35px;background:#fff;box-shadow:0 2px 8px rgba(0,0,0,.5)"></div>
<div class="t" style="left:48px;top:156px;font-size:24px;color:#000">Untitled-1.psd @ 33.3% (Layer 1, CMYK/8) *</div>
<!-- status bar -->
<div class="a" style="left:79px;top:1468px;width:524px;height:32px;background:#323232"></div>
<div class="a" style="left:603px;top:1468px;width:1302px;height:32px;background:#2a2a2a"></div>
<div class="t" style="left:103px;top:1474px;font-size:21.8px;color:#d6d6d6">33.33%</div>
<svg style="left:205px;top:1471px" width="28" height="24" viewBox="0 0 28 24"><path d="M10 5.5 H2 V22.5 H22 V17" fill="none" stroke="#d0d0d0" stroke-width="2.2"/><path d="M9 18 C9 10 13 7 19 7 V2.500 L27 9.500 L19 16.500 V12 C14 12 11 13.500 9 18Z" fill="#d0d0d0"/></svg>
<div class="t" style="left:316px;top:1474px;font-size:22.2px;color:#b4b4b4">Doc: 33.2M/34.8M</div>
<svg style="left:584px;top:1475px" width="10" height="18" viewBox="0 0 10 18"><path d="M1.500 1.500 L8 9 L1.500 16.500" fill="none" stroke="#cfcfcf" stroke-width="2"/></svg>


<!-- SWATCHES -->
<div class="a" style="left:1443px;top:337px;width:463px;height:1146px;background:#323232;box-shadow:0 -5px 7px 1px rgba(0,0,0,.6)"></div>
<div class="a" style="left:1443px;top:337px;width:2px;height:1146px;background:#242424"></div>
<div class="tabbar" style="left:1445px;top:337px;width:461px;height:35px"></div>
<div class="tab" style="left:1445px;top:339px;width:121px;height:34px"></div>
<div class="a" style="left:1639px;top:339px;width:1.5px;height:32px;background:#232323"></div>
<div class="a" style="left:1777px;top:339px;width:1.5px;height:32px;background:#232323"></div>
<div class="t b" style="left:1458px;top:344px;font-size:20.6px;color:#ececec">Swatches</div>
<div class="t b" style="left:1580px;top:344px;font-size:20.6px;color:#9d9d9d">Brush</div>
<div class="t b" style="left:1652px;top:344px;font-size:20.6px;color:#9d9d9d;width:124px;overflow:hidden;height:26px">Brush Presets</div>
<svg style="left:1826px;top:346px" width="18" height="17" viewBox="0 0 18 17"><path d="M1 1.5 L7.5 8.5 L1 15.5 M10 1.5 L16.5 8.5 L10 15.5" fill="none" stroke="#c4c4c4" stroke-width="2"/></svg>
<div class="a" style="left:1858px;top:343px;width:2px;height:23px;background:#8a8a8a"></div>
<svg style="left:1874px;top:348px" width="20" height="15" viewBox="0 0 20 15"><path d="M0 1 H20 M0 5.300 H20 M0 9.600 H20 M0 13.900 H20" stroke="#a2a2a2" stroke-width="1.7"/></svg>
<div class="a" style="left:1453px;top:389px;width:420px;height:36px;background:#2a2a2a"></div>
<div class="a" style="left:1456px;top:392px;width:30px;height:30px;background:#f4b470"></div>
<div class="a" style="left:1488px;top:392px;width:30px;height:30px;background:#6a80ee"></div>
<div class="a" style="left:1520px;top:392px;width:30px;height:30px;background:#a68054"></div>
<div class="a" style="left:1552px;top:392px;width:30px;height:30px;background:#fedfc4"></div>
<div class="a" style="left:1584px;top:392px;width:30px;height:30px;background:#ecd3b8"></div>
<div class="a" style="left:1616px;top:392px;width:30px;height:30px;background:#feb56c"></div>
<div class="a" style="left:1648px;top:392px;width:30px;height:30px;background:#fec06c"></div>
<div class="a" style="left:1680px;top:392px;width:30px;height:30px;background:#fca93c"></div>
<div class="a" style="left:1712px;top:392px;width:30px;height:30px;background:#d536f0"></div>
<div class="a" style="left:1744px;top:392px;width:30px;height:30px;background:#1c52f2"></div>
<div class="a" style="left:1776px;top:392px;width:30px;height:30px;background:#1a36f4"></div>
<div class="a" style="left:1808px;top:392px;width:30px;height:30px;background:#1f7ef6"></div>
<div class="a" style="left:1840px;top:392px;width:30px;height:30px;background:#fb1c62"></div>
<div class="a" style="left:1445px;top:431px;width:461px;height:2px;background:#2a2a2a"></div>
<div class="a" style="left:1873px;top:433px;width:33px;height:985px;background:#2f2f2f"></div>
<div class="a" style="left:1880px;top:438px;width:20px;height:41px;border-radius:10px;background:#4c4c4c"></div>
<div class="a" style="left:1445px;top:433px;width:428px;height:985px;overflow:hidden">
<div class="a" style="left:0;top:39px;width:428px;height:1.5px;background:#2a2a2a"></div>
<div class="a" style="left:5px;top:3px;width:34px;height:34px;background:#fedd00"></div>
<div class="t" style="left:47px;top:10px;font-size:20.8px;color:#e4e4e4">PANTONE Yellow C</div>
<div class="a" style="left:0;top:79px;width:428px;height:1.5px;background:#2a2a2a"></div>
<div class="a" style="left:5px;top:43px;width:34px;height:34px;background:#ffd600"></div>
<div class="t" style="left:47px;top:50px;font-size:20.8px;color:#e4e4e4">PANTONE Yellow 012 C</div>
<div class="a" style="left:0;top:119px;width:428px;height:1.5px;background:#2a2a2a"></div>
<div class="a" style="left:5px;top:83px;width:34px;height:34px;background:#ff5a00"></div>
<div class="t" style="left:47px;top:90px;font-size:20.8px;color:#e4e4e4">PANTONE Orange 021 C</div>
<div class="a" style="left:0;top:159px;width:428px;height:1.5px;background:#2a2a2a"></div>
<div class="a" style="left:5px;top:123px;width:34px;height:34px;background:#f9423a"></div>
<div class="t" style="left:47px;top:130px;font-size:20.8px;color:#e4e4e4">PANTONE Warm Red C</div>
<div class="a" style="left:0;top:199px;width:428px;height:1.5px;background:#2a2a2a"></div>
<div class="a" style="left:5px;top:163px;width:34px;height:34px;background:#ef3340"></div>
<div class="t" style="left:47px;top:170px;font-size:20.8px;color:#e4e4e4">PANTONE Red 032 C</div>
<div class="a" style="left:0;top:239px;width:428px;height:1.5px;background:#2a2a2a"></div>
<div class="a" style="left:5px;top:203px;width:34px;height:34px;background:#d4005f"></div>
<div class="t" style="left:47px;top:210px;font-size:20.8px;color:#e4e4e4">PANTONE Rubine Red C</div>
<div class="a" style="left:0;top:279px;width:428px;height:1.5px;background:#2a2a2a"></div>
<div class="a" style="left:5px;top:243px;width:34px;height:34px;background:#e62a9c"></div>
<div class="t" style="left:47px;top:250px;font-size:20.8px;color:#e4e4e4">PANTONE Rhodamine Red C</div>
<div class="a" style="left:0;top:319px;width:428px;height:1.5px;background:#2a2a2a"></div>
<div class="a" style="left:5px;top:283px;width:34px;height:34px;background:#b742c0"></div>
<div class="t" style="left:47px;top:290px;font-size:20.8px;color:#e4e4e4">PANTONE Purple C</div>
<div class="a" style="left:0;top:359px;width:428px;height:1.5px;background:#2a2a2a"></div>
<div class="a" style="left:5px;top:323px;width:34px;height:34px;background:#4a1fa0"></div>
<div class="t" style="left:47px;top:330px;font-size:20.8px;color:#e4e4e4">PANTONE Violet C</div>
<div class="a" style="left:0;top:399px;width:428px;height:1.5px;background:#2a2a2a"></div>
<div class="a" style="left:5px;top:363px;width:34px;height:34px;background:#0a1fa8"></div>
<div class="t" style="left:47px;top:370px;font-size:20.8px;color:#e4e4e4">PANTONE Blue 072 C</div>
<div class="a" style="left:0;top:439px;width:428px;height:1.5px;background:#2a2a2a"></div>
<div class="a" style="left:5px;top:403px;width:34px;height:34px;background:#0a2594"></div>
<div class="t" style="left:47px;top:410px;font-size:20.8px;color:#e4e4e4">PANTONE Reflex Blue C</div>
<div class="a" style="left:0;top:479px;width:428px;height:1.5px;background:#2a2a2a"></div>
<div class="a" style="left:5px;top:443px;width:34px;height:34px;background:#0a85d4"></div>
<div class="t" style="left:47px;top:450px;font-size:20.8px;color:#e4e4e4">PANTONE Process Blue C</div>
<div class="a" style="left:0;top:519px;width:428px;height:1.5px;background:#2a2a2a"></div>
<div class="a" style="left:5px;top:483px;width:34px;height:34px;background:#0aab85"></div>
<div class="t" style="left:47px;top:490px;font-size:20.8px;color:#e4e4e4">PANTONE Green C</div>
<div class="a" style="left:0;top:559px;width:428px;height:1.5px;background:#2a2a2a"></div>
<div class="a" style="left:5px;top:523px;width:34px;height:34px;background:#2c2825"></div>
<div class="t" style="left:47px;top:530px;font-size:20.8px;color:#e4e4e4">PANTONE Black C</div>
<div class="a" style="left:0;top:599px;width:428px;height:1.5px;background:#2a2a2a"></div>
<div class="a" style="left:5px;top:563px;width:34px;height:34px;background:#ffde00"></div>
<div class="t" style="left:47px;top:570px;font-size:20.8px;color:#e4e4e4">PANTONE Process Yellow C</div>
<div class="a" style="left:0;top:639px;width:428px;height:1.5px;background:#2a2a2a"></div>
<div class="a" style="left:5px;top:603px;width:34px;height:34px;background:#d6006e"></div>
<div class="t" style="left:47px;top:610px;font-size:20.8px;color:#e4e4e4">PANTONE Process Magenta C</div>
<div class="a" style="left:0;top:679px;width:428px;height:1.5px;background:#2a2a2a"></div>
<div class="a" style="left:5px;top:643px;width:34px;height:34px;background:#0a9bdc"></div>
<div class="t" style="left:47px;top:650px;font-size:20.8px;color:#e4e4e4">PANTONE Process Cyan C</div>
<div class="a" style="left:0;top:719px;width:428px;height:1.5px;background:#2a2a2a"></div>
<div class="a" style="left:5px;top:683px;width:34px;height:34px;background:#1f1f1f"></div>
<div class="t" style="left:47px;top:690px;font-size:20.8px;color:#e4e4e4">PANTONE Process Black C</div>
<div class="a" style="left:0;top:759px;width:428px;height:1.5px;background:#2a2a2a"></div>
<div class="a" style="left:5px;top:723px;width:34px;height:34px;background:#ffdd00"></div>
<div class="t" style="left:47px;top:730px;font-size:20.8px;color:#e4e4e4">PANTONE Hexachrome Yellow C</div>
<div class="a" style="left:0;top:799px;width:428px;height:1.5px;background:#2a2a2a"></div>
<div class="a" style="left:5px;top:763px;width:34px;height:34px;background:#ff7c1f"></div>
<div class="t" style="left:47px;top:770px;font-size:20.8px;color:#e4e4e4">PANTONE Hexachrome Orange C</div>
<div class="a" style="left:0;top:839px;width:428px;height:1.5px;background:#2a2a2a"></div>
<div class="a" style="left:5px;top:803px;width:34px;height:34px;background:#de0090"></div>
<div class="t" style="left:47px;top:810px;font-size:20.8px;color:#e4e4e4">PANTONE Hexachrome Magenta C</div>
<div class="a" style="left:0;top:879px;width:428px;height:1.5px;background:#2a2a2a"></div>
<div class="a" style="left:5px;top:843px;width:34px;height:34px;background:#0a8bd4"></div>
<div class="t" style="left:47px;top:850px;font-size:20.8px;color:#e4e4e4">PANTONE Hexachrome Cyan C</div>
<div class="a" style="left:0;top:919px;width:428px;height:1.5px;background:#2a2a2a"></div>
<div class="a" style="left:5px;top:883px;width:34px;height:34px;background:#0aab4f"></div>
<div class="t" style="left:47px;top:890px;font-size:20.8px;color:#e4e4e4">PANTONE Hexachrome Green C</div>
<div class="a" style="left:0;top:959px;width:428px;height:1.5px;background:#2a2a2a"></div>
<div class="a" style="left:5px;top:923px;width:34px;height:34px;background:#222222"></div>
<div class="t" style="left:47px;top:930px;font-size:20.8px;color:#e4e4e4">PANTONE Hexachrome Black C</div>
<div class="a" style="left:0;top:999px;width:428px;height:1.5px;background:#2a2a2a"></div>
<div class="a" style="left:5px;top:963px;width:34px;height:34px;background:#f4e87c"></div>
<div class="t" style="left:47px;top:970px;font-size:20.8px;color:#e4e4e4">PANTONE 100 C</div>
</div>
<div class="a" style="left:1445px;top:1418px;width:461px;height:50px;background:#323232"></div>
<div class="a" style="left:1445px;top:1467px;width:461px;height:2px;background:#262626"></div>
<div class="a" style="left:1445px;top:1469px;width:461px;height:14px;background:#2f2f2f"></div>
<div class="grip" style="left:1657px;top:1472px;width:39px;height:8px"></div>
<div class="a" style="left:1443px;top:1483px;width:463px;height:2px;background:#1e1e1e"></div>
<div class="a" style="left:1872px;top:1485px;width:33px;height:15px;background:#2f2f2f"></div>
<svg style="left:1767px;top:1432px" width="22" height="22" viewBox="0 0 22 22"><path d="M1.5 1.5 H20.5 V20.5 H9.500 L1.500 12.500Z M1.500 12.500 H9.500 V20.500" fill="none" stroke="#d2d2d2" stroke-width="2" stroke-linejoin="round"/></svg>
<svg style="left:1825px;top:1430px" width="22" height="26" viewBox="0 0 22 26"><g fill="none" stroke="#7e7e7e" stroke-width="2"><path d="M1 5 H21 M7 5 V2 H15 V5"/><path d="M3.500 8 V24.500 H18.500 V8"/><path d="M8 9 V21 M11 9 V21 M14 9 V21" stroke-width="1.600"/></g></svg>


<!-- DOCK -->
<div class="a" style="left:1910px;top:110px;width:648px;height:26px;background:#282828"></div>
<svg style="left:1958px;top:117px" width="15" height="11" viewBox="0 0 15 11"><path d="M5.500 1 L1.500 5.500 L5.500 10 M12.500 1 L8.500 5.500 L12.500 10" fill="none" stroke="#b0b0b0" stroke-width="1.5"/></svg>
<svg style="left:2529px;top:117px" width="15" height="11" viewBox="0 0 15 11"><path d="M2 1 L6 5.500 L2 10 M9 1 L13 5.500 L9 10" fill="none" stroke="#b0b0b0" stroke-width="1.5"/></svg>
<div class="a" style="left:1910px;top:136px;width:75px;height:1364px;background:#323232"></div>
<div class="a" style="left:1985px;top:136px;width:5px;height:1364px;background:#262626"></div>
<div class="a" style="left:1910px;top:272px;width:75px;height:2.5px;background:#242424"></div>
<div class="a" style="left:1910px;top:354px;width:75px;height:2.5px;background:#242424"></div>
<div class="a" style="left:1910px;top:549px;width:75px;height:2.5px;background:#242424"></div>
<div class="a" style="left:1910px;top:687px;width:75px;height:2.5px;background:#242424"></div>
<div class="a" style="left:1910px;top:769px;width:75px;height:2.5px;background:#242424"></div>
<div class="grip" style="left:1928px;top:142px;width:39px"></div>
<div class="grip" style="left:1928px;top:280px;width:39px"></div>
<div class="grip" style="left:1928px;top:362px;width:39px"></div>
<div class="grip" style="left:1928px;top:556px;width:39px"></div>
<div class="grip" style="left:1928px;top:694px;width:39px"></div>
<svg style="left:1934.0px;top:165.5px" width="36" height="35" viewBox="0 0 36 35"><g transform="scale(1.05 1.02)"><g fill="none" stroke="#d6d6d6" stroke-width="1.8"><rect x="2" y="1" width="8" height="8"/><rect x="2" y="13" width="8" height="8"/></g><rect x="1" y="24" width="10" height="10" fill="#d6d6d6"/><path fill="#d6d6d6" d="M17 9 L27 3 L26.500 8.500 C33 14 32 26 20 29.500 C27 24 27.500 16 23.500 11.500 L21 14.500Z"/></g></svg>
<svg style="left:1936.0px;top:224.0px" width="30" height="30" viewBox="0 0 30 30"><path d="M1 0.500 L29 15 L1 29.500Z" fill="#d6d6d6"/></svg>
<svg style="left:1931.0px;top:305.0px" width="34" height="34" viewBox="0 0 34 34"><g fill="none" stroke="#d6d6d6" stroke-width="1.700" stroke-linejoin="round"><path d="M11 2 L20.500 7 V16.500 L11 21.500 L1.500 16.500 V7Z" fill="#8a8a8a"/><path d="M1.500 7 L11 11.500 L20.500 7 M11 11.500 V21.500"/></g><rect x="24" y="2" width="9" height="8" fill="#d6d6d6"/><rect x="24" y="12.500" width="9" height="8" fill="#d6d6d6"/><rect x="1" y="25" width="32" height="8" fill="#d6d6d6"/><path d="M24 27 H31 L27.500 31.500Z" fill="#2a2a2a"/></svg>
<div class="a" style="left:1920px;top:379px;width:55px;height:46px;background:#1c1c1c;border:1.5px solid #3a3a3a;border-radius:6px"></div>
<svg style="left:1932.25px;top:385.25px" width="33.5" height="33.5" viewBox="0 0 33.5 33.5"><rect x="1.0" y="1.0" width="10.5" height="10.500" fill="#8c8c8c"/><rect x="11.5" y="1.0" width="10.5" height="10.500" fill="#5c5c5c"/><rect x="22.0" y="1.0" width="10.5" height="10.500" fill="#3e3e3e"/><rect x="1.0" y="11.5" width="10.5" height="10.500" fill="#5c5c5c"/><rect x="11.5" y="11.5" width="10.5" height="10.500" fill="#4a4a4a"/><rect x="22.0" y="11.5" width="10.5" height="10.500" fill="#2e2e2e"/><rect x="1.0" y="22.0" width="10.5" height="10.500" fill="#2a2a2a"/><rect x="11.5" y="22.0" width="10.5" height="10.500" fill="#222"/><rect x="22.0" y="22.0" width="10.5" height="10.500" fill="#1e1e1e"/><path d="M1 1 H32.500 V32.500 H1Z M11.500 1 V32.500 M22 1 V32.500 M1 11.500 H32.500 M1 22 H32.500" fill="none" stroke="#d6d6d6" stroke-width="1.800"/></svg>
<svg style="left:1932.0px;top:439.0px" width="34" height="40" viewBox="0 0 34 40"><g fill="#d6d6d6"><rect x="9" y="23" width="17" height="16"/><path d="M5 1 C1 6 1 12 5.500 15 L11 23 L13.500 22 L9 14 C9.500 9 8 4 5 1Z"/><path d="M16.500 0 C14 3 14 8 15.800 11 L15.500 23 H18.500 L18.200 11 C20 8 20 3 16.500 0Z"/><path d="M32 8 C26 6 22 9 22 13 L19.500 22 L22 23 L26 15 C30 14 33 12 32 8Z"/></g></svg>
<svg style="left:1928.0px;top:502.0px" width="42" height="30" viewBox="0 0 42 30"><g fill="#d6d6d6"><path d="M0 3 C6 -1 14 0 19 4 C14 9 8 10 5 7 C3 5 1 4 0 3Z"/><rect x="21" y="3" width="21" height="4" rx="2"/><rect x="4" y="19" width="21" height="4" rx="2"/><path d="M36 10 C41 14 43 22 39 30 C34 28 29 25 26 19 C30 17 33 14 36 10Z"/></g></svg>
<div class="t" style="left:1935.5px;top:578px;font-size:35px;color:#d6d6d6">A</div>
<div class="a" style="left:1962px;top:578px;width:2px;height:34px;background:#d6d6d6"></div>
<svg style="left:1937.0px;top:638.0px" width="24" height="32" viewBox="0 0 24 32"><path fill="#d6d6d6" d="M11 0 H23 V32 H19.500 V3 H16.500 V32 H13 V17 H11 C4.500 17 0 13.500 0 8.500 C0 3.500 4.500 0 11 0Z"/></svg>
<svg style="left:1935.0px;top:718.0px" width="28" height="32" viewBox="0 0 28 32"><path fill="#d6d6d6" d="M0 0 H28 V19 L16 31.500 H0Z"/><path d="M6 9 H21 M6 14 H21 M6 19 H13" stroke="#2e2e2e" stroke-width="2.200"/><path d="M17 32 V20.500 H28Z" fill="#2e2e2e"/><path d="M18.500 30 V22 H26.500Z" fill="#d6d6d6"/></svg>
<div class="a" style="left:1990px;top:136px;width:568px;height:1364px;background:#323232"></div>
<div class="tabbar" style="left:1990px;top:136px;width:568px;height:35px"></div>
<div class="tab" style="left:1990px;top:138px;width:116px;height:34px"></div>
<div class="a" style="left:2263px;top:138px;width:1.500px;height:32px;background:#232323"></div>
<div class="a" style="left:2351px;top:138px;width:1.500px;height:32px;background:#232323"></div>
<div class="t b" style="left:2004px;top:143px;font-size:21.3px;color:#ececec">Libraries</div>
<div class="t b" style="left:2120px;top:143px;font-size:21.400px;color:#9d9d9d">Adjustments</div>
<div class="t b" style="left:2278px;top:143px;font-size:20.5px;color:#9d9d9d">Styles</div>
<svg style="left:2524px;top:146px" width="20" height="15" viewBox="0 0 20 15"><path d="M0 1 H20 M0 5.3 H20 M0 9.6 H20 M0 13.9 H20" stroke="#8e8e8e" stroke-width="1.7"/></svg>
<div class="dd" style="left:2007px;top:187px;width:421px;height:37px"></div>
<div class="t" style="left:2028px;top:194px;font-size:22.500px;color:#f0f0f0">Untitled-1</div>
<svg style="left:2402px;top:202px" width="14" height="9" viewBox="0 0 14 9"><path d="M1.5 1.5 L7 7 L12.5 1.5" fill="none" stroke="#cfcfcf" stroke-width="2.2" stroke-linecap="round" stroke-linejoin="round"/></svg>
<svg style="left:2454px;top:194px" width="23" height="23" viewBox="0 0 23 23"><g fill="#d6d6d6"><rect x="0" y="0" width="10" height="10"/><rect x="12.500" y="0" width="10" height="10"/><rect x="0" y="12.500" width="10" height="10"/><rect x="12.500" y="12.500" width="10" height="10"/></g></svg>
<div class="a" style="left:2494px;top:184px;width:43px;height:45px;background:#1c1c1c;border:1.500px solid #3a3a3a;border-radius:6px"></div>
<svg style="left:2504px;top:194px" width="23" height="23" viewBox="0 0 23 23"><g fill="#d6d6d6"><rect x="0" y="0" width="23" height="4"/><rect x="0" y="6.300" width="23" height="4"/><rect x="0" y="12.600" width="23" height="4"/><rect x="0" y="18.900" width="23" height="4"/></g></svg>
<svg style="left:2005px;top:251px" width="22" height="22" viewBox="0 0 22 22"><circle cx="13" cy="8.500" r="6.500" fill="none" stroke="#d6d6d6" stroke-width="2.400"/><path d="M8.500 13.500 L2 20" stroke="#d6d6d6" stroke-width="3.400" stroke-linecap="round"/></svg>
<div class="t" style="left:2036px;top:251px;font-size:22.400px;color:#7c7c7c">Search Adobe Stock</div>
<svg style="left:2518px;top:257px" width="14" height="9" viewBox="0 0 14 9"><path d="M1.5 1.5 L7 7 L12.5 1.5" fill="none" stroke="#bdbdbd" stroke-width="2.2" stroke-linecap="round" stroke-linejoin="round"/></svg>
<div class="a" style="left:2006px;top:282px;width:534px;height:1.500px;background:#4c4c4c"></div>
<div class="a" style="left:1990px;top:296px;width:535px;height:427px;background:#2d2d2d"></div>
<div class="t" style="left:2010px;top:316px;font-size:22.300px;color:#a2a2a2">Graphics</div>
<div class="a" style="left:2010px;top:348px;width:64px;height:64px;background:#1e1e1e"></div>
<div class="a" style="left:2074px;top:348px;width:448px;height:64px;background:#4a4a4a"></div>
<div class="a" style="left:2012px;top:360px;width:60px;height:40px;background:linear-gradient(180deg,#f7ecd2 0,#e9e7d0 28%,#b9c7b8 40%,#8fa08c 50%,#5d5a52 62%,#5a5344 80%,#6a5245 100%)"><svg style="left:0;top:0" width="60" height="40" viewBox="0 0 60 40"><path d="M0 14 L10 19 L22 24 L30 24 L40 19 L50 15 L60 12 V40 H0Z" fill="#5a5650"/><path d="M0 16 L14 24 L24 27 L18 40 H0Z" fill="#4a3f44"/><path d="M60 13 L44 22 L34 27 L42 40 H60Z" fill="#514a48"/><path d="M14 30 L46 29 L60 40 H0Z" fill="#5e5a44"/><ellipse cx="8" cy="36" rx="7" ry="3" fill="#8a5a3e"/></svg></div>
<div class="t" style="left:2094px;top:369px;font-size:22.500px;color:#dedede">photo-1429279684222-2c35cecb...</div>
<div class="a" style="left:2450px;top:366px;width:66px;height:28px;background:#1c1c1c;border-radius:6px"></div>
<div class="t" style="left:2460px;top:372px;font-size:17.500px;color:#f4f4f4">JPEG</div>
<div class="a" style="left:1990px;top:723px;width:568px;height:2px;background:#2a2a2a"></div>
<svg style="left:2011px;top:734px" width="26" height="27" viewBox="0 0 26 27"><path fill="#d6d6d6" d="M13 0 L23 10 H17.500 V16 H8.500 V10 H3Z"/><path d="M1 20.500 H25 M1 25 H25" stroke="#d6d6d6" stroke-width="2"/></svg>
<svg style="left:2060px;top:733px" width="32" height="30" viewBox="0 0 32 30"><rect x="16" y="11" width="14" height="14" fill="#d6d6d6"/><path d="M2 22.500 L23 3 V22.500Z" fill="none" stroke="#d6d6d6" stroke-width="2"/><circle cx="18" cy="22" r="5.500" fill="#323232" stroke="#d6d6d6" stroke-width="2"/></svg>
<div class="t" style="left:2113px;top:732px;font-size:33px;color:#8a8a8a">A</div>
<div class="t" style="left:2161px;top:730px;font-size:34px;-webkit-text-stroke:0;color:#858585;font-style:italic;letter-spacing:-.5px">fx</div>
<div class="a" style="left:2210px;top:734px;width:28px;height:28px;background:#f5b96c;border:1.500px solid #f9dab0"></div>
<svg style="left:2457px;top:735px" width="34" height="27" viewBox="0 0 34 27"><g fill="none" stroke="#d6d6d6" stroke-width="2.600" stroke-linecap="round"><path d="M22 23 H9.500 C4.500 23 1.500 19.500 1.500 15.500 C1.500 11.500 4.500 8.500 8 8.500 C9.500 4 13 1.500 17 1.500 C22.500 1.500 26 5 26.500 9.500 C30 10 32.500 12.500 32.500 16"/><path d="M11.500 18.500 C8.500 15 13 10 17 13 L22 18"/><path d="M17 8 C21 5 26 10 22 14"/></g><path d="M25.500 13 V21" stroke="#d6d6d6" stroke-width="3" stroke-linecap="round"/><circle cx="25.500" cy="25" r="1.800" fill="#d6d6d6"/></svg>
<svg style="left:2510px;top:735px" width="22" height="26" viewBox="0 0 22 26"><g fill="none" stroke="#d6d6d6" stroke-width="2"><path d="M1 5 H21 M7 5 V2 H15 V5"/><path d="M3.500 8 V24.500 H18.500 V8"/><path d="M8 9 V21 M11 9 V21 M14 9 V21" stroke-width="1.600"/></g></svg>
<div class="a" style="left:1990px;top:772px;width:568px;height:6px;background:#262626"></div>
<div class="tabbar" style="left:1990px;top:778px;width:568px;height:35px"></div>
<div class="tab" style="left:1990px;top:780px;width:82px;height:34px"></div>
<div class="t b" style="left:2004px;top:785px;font-size:21.2px;color:#ececec">Color</div>
<svg style="left:2524px;top:788px" width="20" height="15" viewBox="0 0 20 15"><path d="M0 1 H20 M0 5.3 H20 M0 9.6 H20 M0 13.9 H20" stroke="#8e8e8e" stroke-width="1.7"/></svg>
<div class="a" style="left:2029px;top:853px;width:38px;height:38px;background:#fff;border:1px solid #111"></div>
<div class="a" style="left:2006px;top:830px;width:43px;height:43px;background:#323232;border:1.500px solid #6a6a6a"></div>
<div class="a" style="left:2009px;top:833px;width:38px;height:38px;background:#f5b96c;border:2px solid #fff;outline:1.500px solid #111"></div>
<div class="a" style="left:2080px;top:826px;width:372px;height:182px;background:linear-gradient(to top,#000,rgba(0,0,0,0)),linear-gradient(to right,#fff,#ff9015)"></div>
<div class="a" style="left:2281px;top:824px;width:24px;height:24px;border:2px solid #111;border-radius:50%"></div>
<div class="a" style="left:2486px;top:826px;width:38px;height:182px;background:linear-gradient(to bottom,#ff0a2a 0%,#ff1a7a 6%,#ff2af0 16%,#9a2aff 26%,#1a2aff 36%,#1a9aff 46%,#1affea 52%,#1aff6a 60%,#2aff2a 68%,#9aff2a 76%,#ffff2a 84%,#ff9a1a 91%,#ff1a1a 100%)"></div>
<svg style="left:2467px;top:982px" width="15" height="16" viewBox="0 0 15 16"><path d="M2.500 0.500 H6 L14 8 L6 15.500 H2.500 Q0.500 15.500 0.500 13.500 V2.500 Q0.500 0.500 2.500 0.500Z" fill="#e4e4e4"/></svg>
<div class="a" style="left:1990px;top:1020px;width:568px;height:6px;background:#262626"></div>
<div class="tabbar" style="left:1990px;top:1026px;width:568px;height:35px"></div>
<div class="tab" style="left:1990px;top:1028px;width:94px;height:34px"></div>
<div class="t b" style="left:2004px;top:1033px;font-size:20.8px;color:#ececec">Layers</div>
<svg style="left:2524px;top:1036px" width="20" height="15" viewBox="0 0 20 15"><path d="M0 1 H20 M0 5.3 H20 M0 9.6 H20 M0 13.9 H20" stroke="#8e8e8e" stroke-width="1.7"/></svg>
<div class="dd" style="left:1997px;top:1077px;width:181px;height:37px"></div>
<svg style="left:2013px;top:1085px" width="22" height="22" viewBox="0 0 22 22"><circle cx="13" cy="8.500" r="6.500" fill="none" stroke="#d6d6d6" stroke-width="2.400"/><path d="M8.500 13.500 L2 20" stroke="#d6d6d6" stroke-width="3.400" stroke-linecap="round"/></svg>
<div class="t" style="left:2040px;top:1085px;font-size:21.5px;color:#f0f0f0">Kind</div>
<svg style="left:2156px;top:1092px" width="14" height="9" viewBox="0 0 14 9"><path d="M1.5 1.5 L7 7 L12.5 1.5" fill="none" stroke="#cfcfcf" stroke-width="2.2" stroke-linecap="round" stroke-linejoin="round"/></svg>
<svg style="left:2199px;top:1085px" width="25" height="21" viewBox="0 0 25 21"><rect x="1" y="1" width="23" height="19" fill="none" stroke="#d6d6d6" stroke-width="2"/><path d="M4 17 L9.500 8.500 L13 13.500 L16 10 L21 17Z" fill="#d6d6d6"/></svg>
<svg style="left:2248px;top:1085px" width="22" height="22" viewBox="0 0 22 22"><circle cx="11" cy="11" r="9.500" fill="none" stroke="#d6d6d6" stroke-width="2"/><path d="M17.700 4.300 A9.500 9.500 0 0 1 4.300 17.700Z" fill="#d6d6d6"/></svg>
<svg style="left:2297px;top:1085px" width="20" height="21" viewBox="0 0 20 21"><path fill="#d6d6d6" d="M0 0 H20 V6 H17.800 V2.600 H11.700 V18.400 H15 V21 H5 V18.400 H8.300 V2.600 H2.200 V6 H0Z"/></svg>
<svg style="left:2343px;top:1084px" width="24" height="24" viewBox="0 0 24 24"><rect x="3.500" y="3.500" width="17" height="17" fill="none" stroke="#d6d6d6" stroke-width="2.200"/><g fill="#323232" stroke="#d6d6d6" stroke-width="1.600"><rect x="1" y="1" width="5" height="5"/><rect x="18" y="1" width="5" height="5"/><rect x="1" y="18" width="5" height="5"/><rect x="18" y="18" width="5" height="5"/></g></svg>
<svg style="left:2393px;top:1083px" width="22" height="25" viewBox="0 0 22 25"><path d="M8 1 H15 L21 7 V19 H8Z M15 1 V7 H21" fill="none" stroke="#d6d6d6" stroke-width="2" stroke-linejoin="round"/><rect x="0" y="12" width="12" height="12" fill="#d6d6d6"/></svg>
<div class="a" style="left:2440px;top:1078px;width:19px;height:36px;border:1.500px solid #555;border-radius:10px;background:#2a2a2a"></div>
<div class="a" style="left:2441px;top:1077px;width:17px;height:17px;border-radius:50%;background:#d6d6d6"></div>
<div class="a" style="left:1990px;top:1122px;width:568px;height:1.500px;background:#2a2a2a"></div>
<div class="dd" style="left:1997px;top:1131px;width:263px;height:37px"></div>
<div class="t" style="left:2012px;top:1139px;font-size:21.5px;color:#f0f0f0">Normal</div>
<svg style="left:2238px;top:1146px" width="14" height="9" viewBox="0 0 14 9"><path d="M1.5 1.5 L7 7 L12.5 1.5" fill="none" stroke="#cfcfcf" stroke-width="2.2" stroke-linecap="round" stroke-linejoin="round"/></svg>
<div class="t dim" style="left:2267px;top:1138px;font-size:22px">Opacity:</div>
<div class="t" style="left:2362px;top:1139px;font-size:21px;color:#e0e0e0;letter-spacing:.2px">100%</div>
<div class="ul" style="left:2352px;top:1167px;width:108px"></div>
<svg style="left:2440px;top:1147px" width="14" height="9" viewBox="0 0 14 9"><path d="M1.5 1.5 L7 7 L12.5 1.5" fill="none" stroke="#cfcfcf" stroke-width="2.2" stroke-linecap="round" stroke-linejoin="round"/></svg>
<div class="a" style="left:1990px;top:1177px;width:568px;height:1.500px;background:#2a2a2a"></div>
<div class="t dim" style="left:2000px;top:1192px;font-size:22px">Lock:</div>
<svg style="left:2065px;top:1193px" width="22" height="22" viewBox="0 0 22 22"><rect x="6" y="1" width="5" height="5" fill="#d6d6d6"/><rect x="16" y="1" width="5" height="5" fill="#d6d6d6"/><rect x="1" y="6" width="5" height="5" fill="#d6d6d6"/><rect x="11" y="6" width="5" height="5" fill="#d6d6d6"/><rect x="6" y="11" width="5" height="5" fill="#d6d6d6"/><rect x="16" y="11" width="5" height="5" fill="#d6d6d6"/><rect x="1" y="16" width="5" height="5" fill="#d6d6d6"/><rect x="11" y="16" width="5" height="5" fill="#d6d6d6"/><rect x="1" y="1" width="20" height="20" fill="none" stroke="#d6d6d6" stroke-width="1.600"/></svg>
<svg style="left:2108px;top:1190px" width="27" height="28" viewBox="0 0 32 32"><path fill="#d6d6d6" d="M31 0.500 C27 4 19 13 15.500 18.500 L19.500 21.500 C23.500 16 29 6.500 31 0.500Z"/><path fill="#d6d6d6" d="M14.300 19.800 C10.500 18.500 7.500 21 7 24.500 C6.700 27.500 4.500 29.500 2 30.500 C8 32 14.500 31 17 27.500 C18.500 25.300 18.300 22.500 17.600 22.300Z"/></svg>
<svg style="left:2150px;top:1191px" width="26" height="26" viewBox="0 0 32 32"><path fill="#d6d6d6" d="M16 1 L21 7.500 H17.300 V14.700 H24.500 V11 L31 16 L24.500 21 V17.300 H17.300 V24.500 H21 L16 31 L11 24.500 H14.700 V17.300 H7.500 V21 L1 16 L7.500 11 V14.700 H14.700 V7.500 H11 Z"/></svg>
<svg style="left:2194px;top:1191px" width="28" height="24" viewBox="0 0 28 24"><path d="M5 4 H17 L23 10 V20 H5Z M17 4 V10 H23" fill="none" stroke="#d6d6d6" stroke-width="2"/><g stroke="#d6d6d6" stroke-width="2"><path d="M0 4 H2.500 M25.500 4 H28 M0 20 H2.500 M25.500 20 H28 M5 0 V2 M23 0 V2 M5 22 V24 M23 22 V24"/></g></svg>
<svg style="left:2241px;top:1191px" width="21" height="24" viewBox="0 0 21 24"><path d="M5.500 10 V6.500 C5.500 0.500 15.500 0.500 15.500 6.500 V10" fill="none" stroke="#d6d6d6" stroke-width="2.400"/><rect x="0.500" y="9.500" width="20" height="14" rx="2" fill="#d6d6d6"/><circle cx="10.500" cy="16.500" r="2.300" fill="#323232"/></svg>
<div class="t dim" style="left:2315px;top:1192px;font-size:22px">Fill:</div>
<div class="t" style="left:2362px;top:1193px;font-size:21px;color:#e0e0e0;letter-spacing:.2px">100%</div>
<div class="ul" style="left:2352px;top:1221px;width:108px"></div>
<svg style="left:2440px;top:1201px" width="14" height="9" viewBox="0 0 14 9"><path d="M1.5 1.5 L7 7 L12.5 1.5" fill="none" stroke="#cfcfcf" stroke-width="2.2" stroke-linecap="round" stroke-linejoin="round"/></svg>
<div class="a" style="left:1990px;top:1232px;width:568px;height:2px;background:#2a2a2a"></div>
<div class="a" style="left:2051px;top:1234px;width:475px;height:76px;background:#4b4b4b"></div>
<div class="a" style="left:1990px;top:1310px;width:536px;height:1.500px;background:#2a2a2a"></div>
<div class="a" style="left:1990px;top:1388px;width:536px;height:1.500px;background:#2a2a2a"></div>
<div class="a" style="left:2050px;top:1234px;width:1.500px;height:217px;background:#2a2a2a"></div>
<svg style="left:2007px;top:1264px" width="27" height="18" viewBox="0 0 27 18"><path d="M0.500 9 C6 0 21 0 26.500 9 C21 18 6 18 0.500 9Z" fill="#d6d6d6"/><circle cx="13.500" cy="8.500" r="5.500" fill="#2a2a2a"/><circle cx="13.500" cy="8.500" r="2.600" fill="#d6d6d6"/><circle cx="15" cy="6.500" r="1.600" fill="#2a2a2a"/></svg>
<svg style="left:2007px;top:1342px" width="27" height="18" viewBox="0 0 27 18"><path d="M0.500 9 C6 0 21 0 26.500 9 C21 18 6 18 0.500 9Z" fill="#d6d6d6"/><circle cx="13.500" cy="8.500" r="5.500" fill="#2a2a2a"/><circle cx="13.500" cy="8.500" r="2.600" fill="#d6d6d6"/><circle cx="15" cy="6.500" r="1.600" fill="#2a2a2a"/></svg>
<svg style="left:2007px;top:1420px" width="27" height="18" viewBox="0 0 27 18"><path d="M0.500 9 C6 0 21 0 26.500 9 C21 18 6 18 0.500 9Z" fill="#d6d6d6"/><circle cx="13.500" cy="8.500" r="5.500" fill="#2a2a2a"/><circle cx="13.500" cy="8.500" r="2.600" fill="#d6d6d6"/><circle cx="15" cy="6.500" r="1.600" fill="#2a2a2a"/></svg>
<svg style="left:2054px;top:1236px" width="56" height="72" viewBox="0 0 56 72"><path d="M18 1 H1 V23 M38 1 H55 V23 M1 50 V71 H18 M55 50 V71 H38" fill="none" stroke="#fff" stroke-width="2"/></svg>
<div class="a" style="left:2057px;top:1239px;width:50px;height:66px;background:#5a5a5a"></div>
<div class="a" style="left:2060px;top:1242px;width:45px;height:60px;background:repeating-conic-gradient(#fff 0 25%,#cfcfcf 0 50%) 0 0/8px 8px"></div>
<div class="a" style="left:2060px;top:1242px;width:45px;height:38px;background:linear-gradient(98deg,#fdebd3 0%,#fcebd3 40%,#e6e7d3 80%,#d5e2d5 100%)"></div>
<div class="t" style="left:2122px;top:1264px;font-size:21.2px;color:#e6e6e6">Layer 1</div>
<div class="a" style="left:2057px;top:1317px;width:50px;height:66px;background:#5a5a5a"></div>
<div class="a" style="left:2060px;top:1320px;width:45px;height:60px;background:repeating-conic-gradient(#fff 0 25%,#cfcfcf 0 50%) 0 0/8px 8px"></div>
<div class="a" style="left:2060px;top:1352px;width:19px;height:28px;background:linear-gradient(180deg,#fbecd2 0,#f3e8cf 35%,#6a6a60 42%,#54484a 70%,#5c4a44 100%)"></div>
<div class="a" style="left:2079px;top:1352px;width:28px;height:31px;background:#2e2e2e"></div>
<svg style="left:2081px;top:1359px" width="25" height="17" viewBox="0 0 25 17"><path fill="#d6d6d6" d="M5 17 C1.500 17 0 14.500 0 12.500 C0 10 2 8 4.500 8 C5 5.500 7 4 9.500 4.500 C11 1.500 14 0 17 1 C20 2 21.500 5 21 7.500 C23.500 8 25 10 25 12.500 C25 15 23 17 20.500 17Z"/></svg>
<div class="t" style="left:2122px;top:1341px;font-size:21.5px;color:#e6e6e6;letter-spacing:.9px">photo-1429279684222-2c35cecbd...</div>
<div class="a" style="left:2057px;top:1395px;width:50px;height:56px;background:#5a5a5a"></div>
<div class="a" style="left:2060px;top:1398px;width:45px;height:53px;background:#fff"></div>
<div class="t" style="left:2122px;top:1421px;font-size:21.5px;color:#e6e6e6">Background</div>
<svg style="left:2472px;top:1416px" width="21" height="24" viewBox="0 0 21 24"><path d="M5.500 10 V6.500 C5.500 0.500 15.500 0.500 15.500 6.500 V10" fill="none" stroke="#d6d6d6" stroke-width="2"/><rect x="1.500" y="10" width="18" height="13" rx="1.500" fill="none" stroke="#d6d6d6" stroke-width="2"/><circle cx="10.500" cy="16.500" r="2.300" fill="#d6d6d6"/></svg>
<div class="a" style="left:2527px;top:1234px;width:31px;height:217px;background:#2a2a2a"></div>
<div class="a" style="left:2532px;top:1238px;width:20px;height:191px;border-radius:10px;background:#4c4c4c"></div>
<div class="a" style="left:1990px;top:1451px;width:568px;height:49px;background:#323232"></div>
<div class="a" style="left:1990px;top:1451px;width:568px;height:1.500px;background:#2a2a2a"></div>
<svg style="left:2149px;top:1467px" width="29" height="16" viewBox="0 0 29 16"><g fill="none" stroke="#8c8c8c" stroke-width="2.300"><rect x="1.500" y="1.500" width="13" height="13" rx="6.500"/><rect x="14.500" y="1.500" width="13" height="13" rx="6.500"/></g><path d="M8 8 H21" stroke="#8c8c8c" stroke-width="3.400" stroke-linecap="round"/></svg>
<div class="t" style="left:2206px;top:1459px;font-size:31px;-webkit-text-stroke:0;color:#d6d6d6;font-style:italic;letter-spacing:-.5px">fx</div>
<svg style="left:2232px;top:1491px" width="8" height="5" viewBox="0 0 8 5"><path d="M0 0 H8 V1.500 H5.500 L4 4.500 L2.500 1.500 H0Z" fill="#d6d6d6"/></svg>
<svg style="left:2260px;top:1465px" width="26" height="20" viewBox="0 0 26 20"><rect width="26" height="20" rx="1.500" fill="#d6d6d6"/><circle cx="13" cy="10" r="6" fill="#2e2e2e"/></svg>
<svg style="left:2315px;top:1464px" width="22" height="22" viewBox="0 0 22 22"><circle cx="11" cy="11" r="9.500" fill="none" stroke="#d6d6d6" stroke-width="2"/><path d="M17.700 4.300 A9.500 9.500 0 0 1 4.300 17.700Z" fill="#d6d6d6"/></svg>
<svg style="left:2340px;top:1491px" width="8" height="5" viewBox="0 0 8 5"><path d="M0 0 H8 V1.500 H5.500 L4 4.500 L2.500 1.500 H0Z" fill="#d6d6d6"/></svg>
<svg style="left:2367px;top:1464px" width="26" height="22" viewBox="0 0 26 22"><path fill="#d6d6d6" d="M0 3 Q0 1 2 1 H10 L12 4 H24 Q26 4 26 6 V20 Q26 22 24 22 H2 Q0 22 0 20Z"/></svg>
<svg style="left:2423px;top:1464px" width="22" height="22" viewBox="0 0 22 22"><path d="M1.500 1.500 H20.500 V20.500 H9.500 L1.500 12.500Z M1.500 12.500 H9.500 V20.500" fill="none" stroke="#d6d6d6" stroke-width="2" stroke-linejoin="round"/></svg>
<svg style="left:2477px;top:1462px" width="22" height="26" viewBox="0 0 22 26"><g fill="none" stroke="#d6d6d6" stroke-width="2"><path d="M1 5 H21 M7 5 V2 H15 V5"/><path d="M3.500 8 V24.500 H18.500 V8"/><path d="M8 9 V21 M11 9 V21 M14 9 V21" stroke-width="1.600"/></g></svg>
<div class="a" style="left:2554px;top:136px;width:4px;height:1364px;background:#272727"></div>
<div class="a" style="left:2556.5px;top:0;width:1.5px;height:1500px;background:#1e1e1e"></div>


</div>
</body>
</html>
